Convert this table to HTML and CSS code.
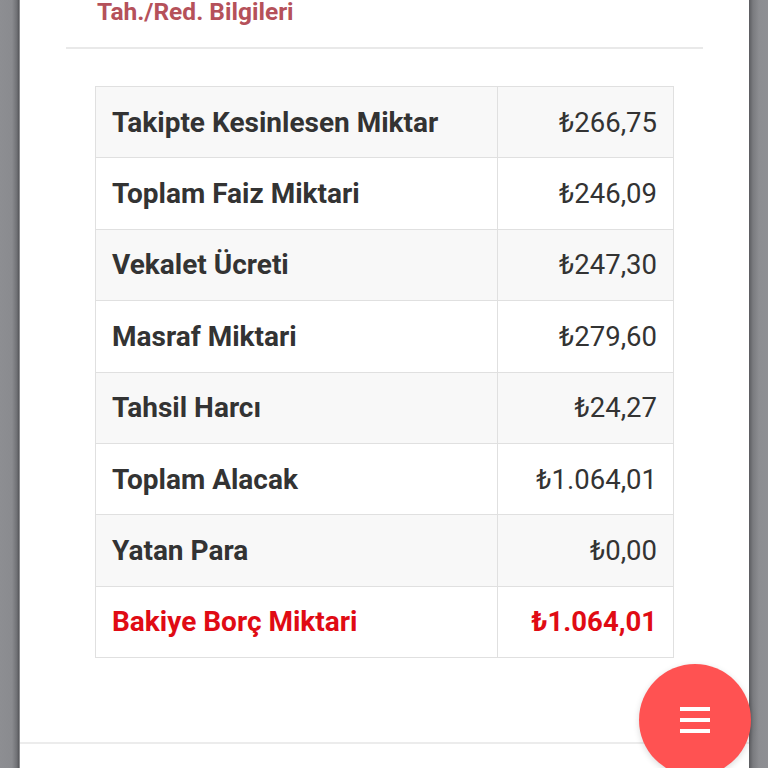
FILE: index.html
```html
<!DOCTYPE html>
<html lang="tr">
<head>
<meta charset="utf-8">
<link rel="stylesheet" href="styles.css">
</head>
<body>
<div class="frame">
  <div class="side side-left"></div>
  <main class="panel">
    <h2 class="title">Tah./Red. Bilgileri</h2>
    <hr class="divider">
    <div class="table-wrap">
      <table class="summary">
        <tr><th>Takipte Kesinlesen Miktar</th><td>₺266,75</td></tr>
        <tr><th>Toplam Faiz Miktari</th><td>₺246,09</td></tr>
        <tr><th>Vekalet Ücreti</th><td>₺247,30</td></tr>
        <tr><th>Masraf Miktari</th><td>₺279,60</td></tr>
        <tr><th>Tahsil Harcı</th><td>₺24,27</td></tr>
        <tr><th>Toplam Alacak</th><td>₺1.064,01</td></tr>
        <tr><th>Yatan Para</th><td>₺0,00</td></tr>
        <tr class="total"><th>Bakiye Borç Miktari</th><td>₺1.064,01</td></tr>
      </table>
    </div>
    <div class="footer-line"></div>
  </main>
  <div class="side side-right"></div>
</div>
<button class="fab" aria-label="Menü">
  <span class="bar"></span><span class="bar"></span><span class="bar"></span>
</button>
</body>
</html>
```

FILE: styles.css
```css
html, body {
  margin: 0;
  padding: 0;
  height: 100%;
  overflow: hidden;
}
body {
  font-family: Roboto, "Liberation Sans", sans-serif;
  background: #8a8b8f;
}
.frame {
  display: flex;
  height: 768px;
}
.side {
  width: 20px;
  flex: none;
}
.side-left {
  background: linear-gradient(to right, #8d8e92 0, #8a8b8f 12px, #6f7074 17px, #55565a 19px, #c8c8ca 20px);
}
.side-right {
  width: 19px;
  background: linear-gradient(to right, #5a5b5f 0, #7a7b7f 4px, #8c8d91 10px, #8e8f93 19px);
}
.panel {
  flex: 1;
  background: #fff;
  display: flex;
  flex-direction: column;
}
.title {
  margin: 0;
  padding-left: 77px;
  font-size: 24.5px;
  line-height: 24px;
  font-weight: 700;
  color: #b5515a;
}
.divider {
  margin: 23px 46px 0;
  border: 0;
  border-top: 2px solid #e9e9e9;
  height: 0;
}
.table-wrap {
  padding: 37px 75px 0;
}
.summary {
  width: 100%;
  border-collapse: collapse;
  font-size: 28px;
  color: #333;
}
.summary th,
.summary td {
  border: 1px solid #e0e0e0;
  height: 71.4px;
  padding: 0 16px;
  box-sizing: border-box;
}
.summary th {
  text-align: left;
  font-weight: 700;
  width: 402px;
}
.summary td {
  text-align: right;
  font-weight: 400;
  font-size: 27.5px;
}
.summary tr:nth-child(odd) {
  background: #f8f8f8;
}
.summary tr.total th,
.summary tr.total td {
  color: #e00b14;
  font-weight: 700;
}
.footer-line {
  margin-top: 84px;
  border-top: 2px solid #ececec;
}
.fab {
  position: absolute;
  left: 639px;
  top: 664px;
  width: 112px;
  height: 112px;
  border-radius: 50%;
  border: 0;
  padding: 0;
  background: #ff5252;
  box-shadow: 0 2px 6px rgba(0,0,0,0.15);
  display: flex;
  flex-direction: column;
  align-items: center;
  justify-content: center;
  gap: 7px;
}
.fab .bar {
  display: block;
  width: 30px;
  height: 4px;
  background: #fff;
}
```
